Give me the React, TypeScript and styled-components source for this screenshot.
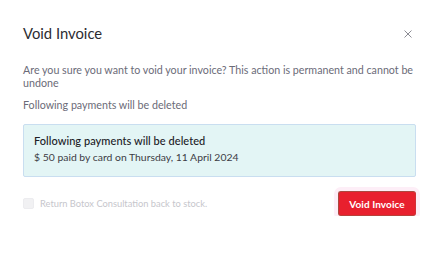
import React from "react";
import styled, { createGlobalStyle } from "styled-components";

const Global = createGlobalStyle`
  html, body { margin: 0; padding: 0; background: #ffffff; }
  body { font-family: Lato, "Liberation Sans", sans-serif; -webkit-font-smoothing: antialiased; }
`;

const Dialog = styled.div`
  width: 439px;
  box-sizing: border-box;
  padding: 23px 23px 0 23px;
  display: flex;
  flex-direction: column;
`;

const Header = styled.div`
  display: flex;
  align-items: center;
  justify-content: space-between;
  height: 20px;
`;

const Title = styled.h2`
  margin: 0;
  font-size: 14.8px;
  line-height: 20px;
  font-weight: 400;
  color: #2c2c31;
`;

const CloseButton = styled.button`
  border: 0;
  background: transparent;
  padding: 0;
  margin-right: 4px;
  margin-top: 1px;
  width: 8px;
  height: 8px;
  display: flex;
  color: #8c8c94;
`;

const Text = styled.p<{ $top: number }>`
  margin: ${(p) => p.$top}px 0 0 0;
  font-size: 10.7px;
  line-height: 13px;
  color: #6b6b78;
`;

const InfoBox = styled.div`
  margin-top: 13px;
  background: #e3f5f5;
  border: 1px solid #c9def0;
  border-radius: 2px;
  padding: 9px 10px 12px 10px;
  display: flex;
  flex-direction: column;
  gap: 4px;
`;

const BoxTitle = styled.div`
  font-size: 11px;
  line-height: 13px;
  color: #202026;
  font-weight: 500;
  letter-spacing: 0.05px;
`;

const BoxLine = styled.div`
  font-size: 10.4px;
  line-height: 13px;
  color: #3c3c44;
`;

const Footer = styled.div`
  margin-top: 14px;
  display: flex;
  align-items: center;
  justify-content: space-between;
`;

const CheckLabel = styled.label`
  display: flex;
  align-items: center;
  gap: 6px;
  font-size: 9.3px;
  color: #c6c6cc;
`;

const Box = styled.span`
  width: 11px;
  height: 11px;
  border-radius: 2px;
  background: #f1f1f3;
  border: 1px solid #ececef;
  box-sizing: border-box;
`;

const VoidButton = styled.button`
  width: 78px;
  height: 25px;
  border-radius: 3px;
  border: 1px solid #a94a40;
  border-right-color: #d23038;
  border-bottom-color: #b8413a;
  background: #e8202e;
  color: #ffffff;
  font-family: Lato, "Liberation Sans", sans-serif;
  font-size: 10px;
  font-weight: 700;
  letter-spacing: 0.1px;
  box-shadow: 0 0 0 4px #fdeef7;
  padding: 0;
`;

export default function App() {
  return (
    <>
      <Global />
      <Dialog>
        <Header>
          <Title>Void Invoice</Title>
          <CloseButton aria-label="Close">
            <svg width="8" height="8" viewBox="0 0 8 8" fill="none">
              <path d="M0.5 0.5L7.5 7.5M7.5 0.5L0.5 7.5" stroke="currentColor" strokeWidth="1" />
            </svg>
          </CloseButton>
        </Header>
        <Text $top={20}>
          Are you sure you want to void your invoice? This action is permanent and cannot be undone
        </Text>
        <Text $top={9}>Following payments will be deleted</Text>
        <InfoBox>
          <BoxTitle>Following payments will be deleted</BoxTitle>
          <BoxLine>$ 50 paid by card on Thursday, 11 April 2024</BoxLine>
        </InfoBox>
        <Footer>
          <CheckLabel>
            <Box />
            Return Botox Consultation back to stock.
          </CheckLabel>
          <VoidButton>Void Invoice</VoidButton>
        </Footer>
      </Dialog>
    </>
  );
}
